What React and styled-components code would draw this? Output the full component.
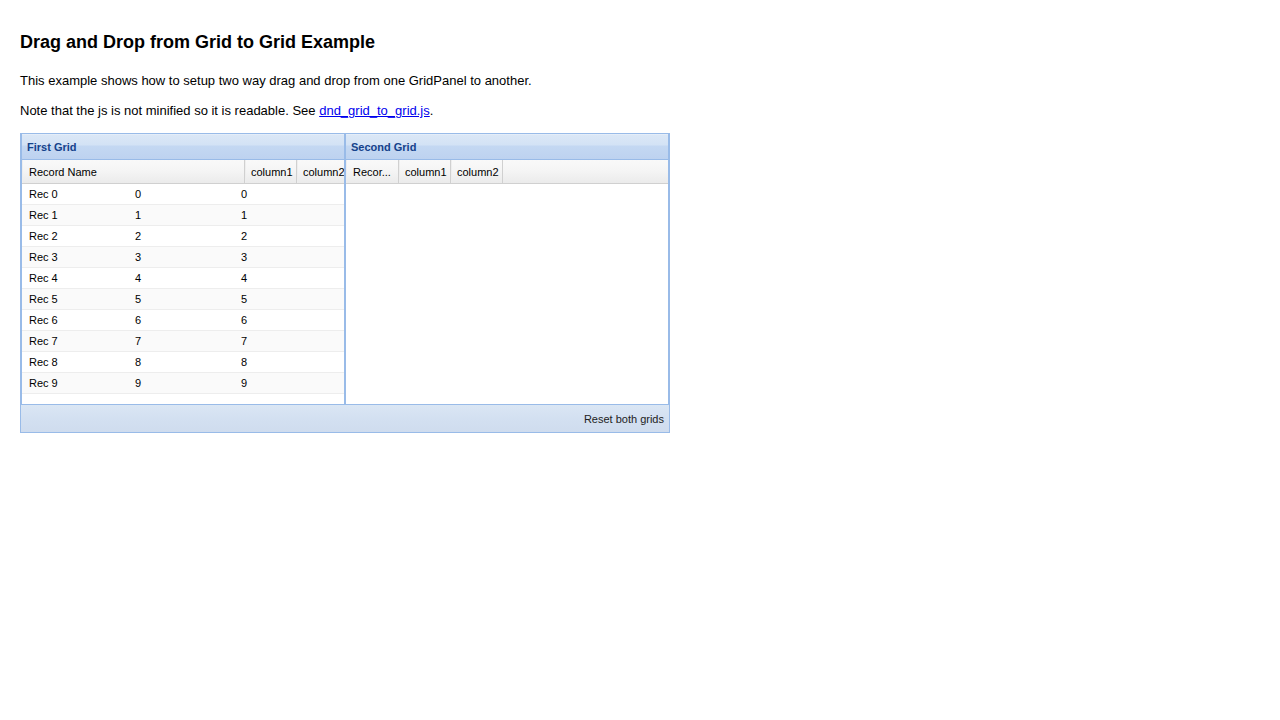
import React from "react";
import styled, { createGlobalStyle } from "styled-components";

const GlobalStyle = createGlobalStyle`
  html, body { margin: 0; padding: 0; background: #fff; }
  body {
    padding: 32px 20px 20px 20px;
    font-family: "Liberation Sans", Arial, sans-serif;
    font-size: 13px;
    color: #000;
  }
`;

const Title = styled.h1`
  margin: 0 0 20px 0;
  font-size: 18px;
  font-weight: bold;
  line-height: 21px;
`;

const Para = styled.p`
  margin: 0 0 15px 0;
  font-size: 13px;
  line-height: 15px;
`;

const Link = styled.a`
  color: #0000ee;
  text-decoration: underline;
`;

const Panel = styled.div`
  width: 650px;
  box-sizing: border-box;
  border: 1px solid #99bbe8;
  display: flex;
  flex-direction: column;
`;

const GridRow = styled.div`
  display: flex;
`;

const Grid = styled.div`
  width: 324px;
  height: 271px;
  box-sizing: border-box;
  border: 1px solid #99bbe8;
  border-top: none;
  display: flex;
  flex-direction: column;
  overflow: hidden;
`;

const GridTitle = styled.div`
  box-sizing: border-box;
  border-bottom: 1px solid #99bbe8;
  height: 26px;
  padding: 6px 3px 3px 5px;
  font-family: "Liberation Sans", Tahoma, sans-serif;
  font-weight: bold;
  font-size: 11px;
  line-height: 15px;
  color: #15428b;
  background: linear-gradient(
    to bottom,
    #eef4fb 0px,
    #dbe7f6 1px,
    #d3e2f5 11px,
    #c4d8f2 12px,
    #bdd2f0 25px
  );
`;

const HeaderRow = styled.div`
  display: flex;
  height: 24px;
  box-sizing: border-box;
  border-bottom: 1px solid #d0d0d0;
  background: linear-gradient(to bottom, #f9f9f9 0%, #f5f5f5 45%, #ebebeb 100%);
`;

const HeaderCell = styled.div`
  width: ${(p) => p.$w}px;
  flex: ${(p) => (p.$fill ? "1 1 auto" : "0 0 auto")};
  box-sizing: border-box;
  border-left: 1px solid #eeeeee;
  border-right: 1px solid #d0d0d0;
  padding: 5px 0 3px ${(p) => (p.$first ? 6 : 5)}px;
  font-size: 11px;
  line-height: 15px;
  color: #000;
  white-space: nowrap;
  overflow: hidden;
  ${(p) => (p.$fill ? "border-right: none;" : "")}
`;

const Body = styled.div`
  flex: 1;
  background: #fff;
  overflow: hidden;
`;

const DataRow = styled.div`
  display: grid;
  grid-template-columns: 107px 106px 1fr;
  height: 21px;
  box-sizing: border-box;
  border-top: 1px solid #ffffff;
  border-bottom: 1px solid #ededed;
  background: ${(p) => (p.$alt ? "#fafafa" : "#ffffff")};
  border-top-color: ${(p) => (p.$alt ? "#fafafa" : "#ffffff")};
`;

const Cell = styled.div`
  padding: 3px 3px 3px ${(p) => (p.$first ? 7 : 6)}px;
  font-size: 11px;
  line-height: 13px;
  color: #000;
  white-space: nowrap;
  overflow: hidden;
`;

const Footer = styled.div`
  height: 27px;
  box-sizing: border-box;
  display: flex;
  align-items: center;
  justify-content: flex-end;
  padding: 2px 5px 0 0;
  background: linear-gradient(to bottom, #dae6f4 0%, #d3e0f1 50%, #cfdcee 100%);
`;

const Button = styled.button`
  border: none;
  background: transparent;
  padding: 0;
  margin: 0;
  font-family: "Liberation Sans", Tahoma, sans-serif;
  font-size: 11px;
  line-height: 15px;
  color: #222;
  cursor: pointer;
`;

const rows = Array.from({ length: 10 }, (_, i) => ({
  name: `Rec ${i}`,
  c1: i,
  c2: i,
}));

function FirstGrid() {
  return (
    <Grid>
      <GridTitle>First Grid</GridTitle>
      <HeaderRow>
        <HeaderCell $w={223} $first>
          Record Name
        </HeaderCell>
        <HeaderCell $w={52}>column1</HeaderCell>
        <HeaderCell $w={47} $fill>
          column2
        </HeaderCell>
      </HeaderRow>
      <Body>
        {rows.map((r, i) => (
          <DataRow key={r.name} $alt={i % 2 === 1}>
            <Cell $first>{r.name}</Cell>
            <Cell>{r.c1}</Cell>
            <Cell>{r.c2}</Cell>
          </DataRow>
        ))}
      </Body>
    </Grid>
  );
}

function SecondGrid() {
  return (
    <Grid>
      <GridTitle>Second Grid</GridTitle>
      <HeaderRow>
        <HeaderCell $w={53} $first>
          Recor...
        </HeaderCell>
        <HeaderCell $w={52}>column1</HeaderCell>
        <HeaderCell $w={52}>column2</HeaderCell>
      </HeaderRow>
      <Body />
    </Grid>
  );
}

export default function App() {
  return (
    <>
      <GlobalStyle />
      <Title>Drag and Drop from Grid to Grid Example</Title>
      <Para>
        This example shows how to setup two way drag and drop from one GridPanel to another.
      </Para>
      <Para>
        Note that the js is not minified so it is readable. See{" "}
        <Link href="#">dnd_grid_to_grid.js</Link>.
      </Para>
      <Panel>
        <GridRow>
          <FirstGrid />
          <SecondGrid />
        </GridRow>
        <Footer>
          <Button type="button">Reset both grids</Button>
        </Footer>
      </Panel>
    </>
  );
}
